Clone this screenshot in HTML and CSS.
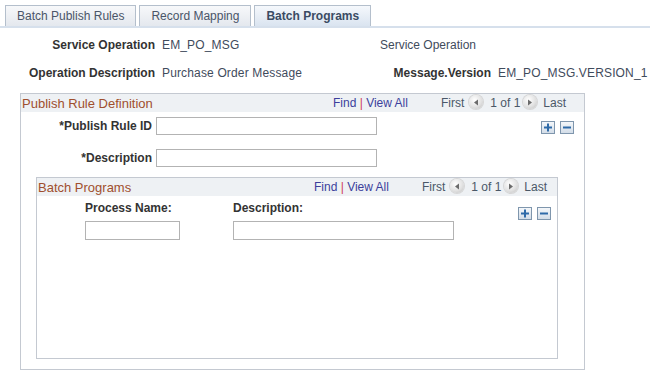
FILE: index.html
```html
<!DOCTYPE html>
<html lang="en">
<head>
    <meta charset="UTF-8">
    <meta name="viewport" content="width=device-width, initial-scale=1.0">
    <title>Batch Programs</title>
    <link rel="stylesheet" href="styles.css">
</head>
<body>
    <div class="tabs">
        <div class="tab">Batch Publish Rules</div>
        <div class="tab">Record Mapping</div>
        <div class="tab active">Batch Programs</div>
    </div>

    <div class="summary">
        <div class="lbl">Service Operation</div>
        <div class="val">EM_PO_MSG</div>
        <div class="val-plain">Service Operation</div>
        <div></div>

        <div class="lbl">Operation Description</div>
        <div class="val">Purchase Order Message</div>
        <div class="lbl">Message.Version</div>
        <div class="val">EM_PO_MSG.VERSION_1</div>
    </div>

    <section class="box rule-box">
        <div class="box-head">
            <span class="box-title">Publish Rule Definition</span>
            <div class="nav">
                <span class="links"><a class="link">Find</a> <span class="sep">|</span> <a class="link">View All</a></span>
                <span class="first">First</span>
                <span class="arrow"><svg width="6" height="7" viewBox="0 0 6 7"><path d="M5 0.5 L1 3.5 L5 6.5 Z" fill="#6b6b6b"/></svg></span>
                <span class="count">1 of 1</span>
                <span class="arrow"><svg width="6" height="7" viewBox="0 0 6 7"><path d="M1 0.5 L5 3.5 L1 6.5 Z" fill="#6b6b6b"/></svg></span>
                <span class="last">Last</span>
            </div>
        </div>

        <div class="rule-body">
            <div class="field-row">
                <label class="field-lbl">*Publish Rule ID</label>
                <input class="field-input" type="text">
                <div class="row-btns">
                    <span class="row-btn"><svg width="12" height="11" viewBox="0 0 12 11"><path d="M6 1.5v8M2 5.5h8" stroke="#2e6aa8" stroke-width="2"/></svg></span>
                    <span class="row-btn"><svg width="12" height="11" viewBox="0 0 12 11"><path d="M2 5.5h8" stroke="#2e6aa8" stroke-width="2"/></svg></span>
                </div>
            </div>
            <div class="field-row">
                <label class="field-lbl">*Description</label>
                <input class="field-input" type="text">
            </div>

            <section class="box programs-box">
                <div class="box-head">
                    <span class="box-title">Batch Programs</span>
                    <div class="nav">
                        <span class="links"><a class="link">Find</a> <span class="sep">|</span> <a class="link">View All</a></span>
                        <span class="first">First</span>
                        <span class="arrow"><svg width="6" height="7" viewBox="0 0 6 7"><path d="M5 0.5 L1 3.5 L5 6.5 Z" fill="#6b6b6b"/></svg></span>
                        <span class="count">1 of 1</span>
                        <span class="arrow"><svg width="6" height="7" viewBox="0 0 6 7"><path d="M1 0.5 L5 3.5 L1 6.5 Z" fill="#6b6b6b"/></svg></span>
                        <span class="last">Last</span>
                    </div>
                </div>
                <div class="programs-body">
                    <div class="programs-grid">
                        <div class="col-lbl">Process Name:</div>
                        <div class="col-lbl">Description:</div>
                        <input class="grid-input" type="text">
                        <input class="grid-input" type="text">
                    </div>
                    <div class="row-btns">
                        <span class="row-btn"><svg width="12" height="11" viewBox="0 0 12 11"><path d="M6 1.5v8M2 5.5h8" stroke="#2e6aa8" stroke-width="2"/></svg></span>
                        <span class="row-btn"><svg width="12" height="11" viewBox="0 0 12 11"><path d="M2 5.5h8" stroke="#2e6aa8" stroke-width="2"/></svg></span>
                    </div>
                </div>
            </section>
        </div>
    </section>
</body>
</html>
```

FILE: styles.css
```css
body {
    margin: 0;
    font-family: "Liberation Sans", Arial, sans-serif;
    font-size: 12px;
    color: #333;
    background-color: #fff;
}
.tabs {
    display: flex;
    align-items: flex-end;
    gap: 3px;
    padding: 5px 0 0 5px;
    border-bottom: 2px solid #d6e0ec;
}
.tab {
    height: 21px;
    line-height: 21px;
    padding: 0 11px;
    border: 1px solid #b4bfcc;
    border-bottom: none;
    background: linear-gradient(#f7f8fa, #e4e8ee);
    color: #4a5568;
    box-sizing: border-box;
}
.tab.active {
    background: linear-gradient(#f5f8fc, #dae4f0);
    color: #3a4b63;
    font-weight: bold;
}
.summary {
    display: grid;
    grid-template-columns: 155px 225px 111px 1fr;
    row-gap: 14px;
    margin-top: 10px;
    line-height: 14px;
}
.lbl {
    font-weight: bold;
    text-align: right;
    color: #333;
}
.val {
    padding-left: 7px;
    color: #3f4b5c;
    letter-spacing: 0.15px;
}
.val-plain {
    color: #3f4b5c;
}
.box {
    border: 1px solid #c4c9d1;
    box-sizing: border-box;
}
.rule-box {
    margin: 13px 0 0 20px;
    width: 565px;
    height: 277px;
}
.box-head {
    display: flex;
    align-items: center;
    height: 18px;
    background-color: #eef1f4;
}
.box-title {
    padding-left: 1px;
    font-size: 13px;
    color: #a04f2e;
}
.nav {
    display: flex;
    align-items: center;
    margin-left: auto;
    padding-right: 18px;
    color: #4b5868;
}
.programs-box .nav {
    padding-right: 10px;
}
.links {
    white-space: pre;
}
.link {
    color: #3c3f9c;
}
.sep {
    color: #d03c62;
}
.first {
    margin-left: 33px;
}
.arrow {
    display: inline-flex;
    align-items: center;
    justify-content: center;
    width: 14px;
    height: 14px;
    margin: -2px 0 0 5px;
    border-radius: 50%;
    background: radial-gradient(circle at 40% 35%, #ffffff, #e2e2e2 55%, #bdbdbd);
    box-shadow: 0 0 0 1px #d6d6d6;
}
.count {
    margin-left: 7px;
}
.arrow + .last {
    margin-left: 6px;
}
.count + .arrow {
    margin-left: 3px;
}
.rule-body {
    padding-top: 5px;
}
.field-row {
    display: flex;
    align-items: center;
    margin-bottom: 14px;
}
.field-lbl {
    width: 131px;
    text-align: right;
    font-weight: bold;
    color: #333;
}
.field-input {
    width: 221px;
    height: 18px;
    margin: 0 0 0 4px;
    padding: 0;
    border: 1px solid #b3b3b3;
    box-sizing: border-box;
}
.row-btns {
    display: flex;
    gap: 5px;
    margin-left: auto;
    margin-right: 10px;
    padding-top: 3px;
}
.row-btn {
    display: inline-flex;
    align-items: center;
    justify-content: center;
    width: 14px;
    height: 13px;
    border: 1px solid #7f96ad;
    background: linear-gradient(#f4f7fa, #d3dde8);
    box-sizing: border-box;
}
.programs-box {
    margin: -4px 0 0 15px;
    width: 522px;
    height: 182px;
}
.programs-body {
    display: flex;
    align-items: flex-start;
}
.programs-grid {
    display: grid;
    grid-template-columns: 95px 221px;
    column-gap: 53px;
    row-gap: 6px;
    padding: 5px 0 0 48px;
    line-height: 14px;
}
.col-lbl {
    font-weight: bold;
    color: #333;
}
.grid-input {
    height: 19px;
    margin: 0;
    padding: 0;
    border: 1px solid #b3b3b3;
    box-sizing: border-box;
}
.programs-body .row-btns {
    margin-right: 6px;
    padding-top: 11px;
}
```
